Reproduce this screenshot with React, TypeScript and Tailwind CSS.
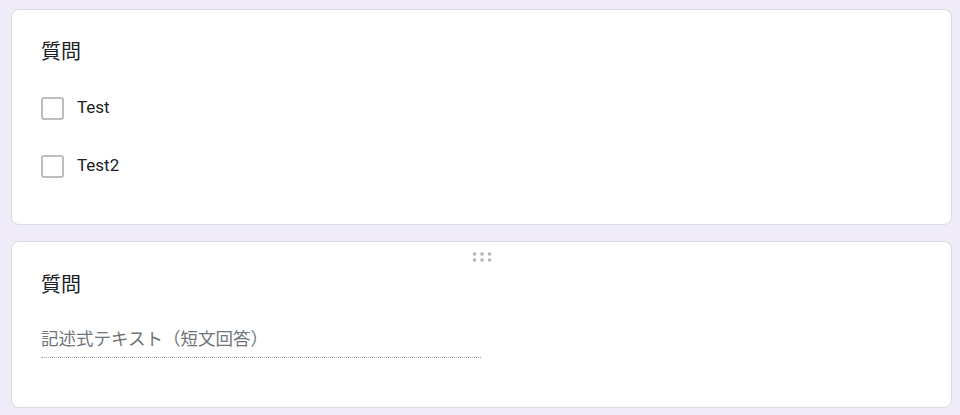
const options = ["Test", "Test2"];

function DragHandle() {
  return (
    <svg width="20" height="10" viewBox="0 0 20 10" aria-hidden="true">
      {[2.5, 10, 17.5].map((cx) =>
        [2, 8].map((cy) => <circle key={`${cx}-${cy}`} cx={cx} cy={cy} r="1.8" fill="#b4b4b4" />)
      )}
    </svg>
  );
}

export default function App() {
  return (
    <main
      className="min-h-[415px] bg-[#f0ebf8] pl-[11px] pr-[8px] pt-[9px] text-[#202124]"
      style={{ fontFamily: 'Roboto, "Noto Sans CJK JP", sans-serif' }}
    >
      <div className="flex flex-col gap-4">
        <section className="rounded-lg border border-[#dadce0] bg-white px-[29px] pb-[29px] pt-[30px]">
          <h2 className="h-6 text-[20px] leading-6">質問</h2>
          <ul className="mt-[15px]">
            {options.map((label) => (
              <li className="flex h-[58px] items-center gap-[13px]" key={label}>
                <span className="h-[23px] w-[23px] rounded-[3px] border-2 border-[#bdbdbd]" />
                <span className="text-[17px] text-[#202124]">{label}</span>
              </li>
            ))}
          </ul>
        </section>

        <section className="rounded-lg border border-[#dadce0] bg-white px-[29px] pb-[49px]">
          <div className="flex h-[31px] justify-center pt-[10px]">
            <DragHandle />
          </div>
          <h2 className="h-6 text-[20px] leading-6">質問</h2>
          <div className="mt-[30px] w-[440px] border-b border-dotted border-[#9aa0a6] pb-[6px] text-[17.5px] leading-6 text-[#70757a]">
            記述式テキスト（短文回答）
          </div>
        </section>
      </div>
    </main>
  );
}
